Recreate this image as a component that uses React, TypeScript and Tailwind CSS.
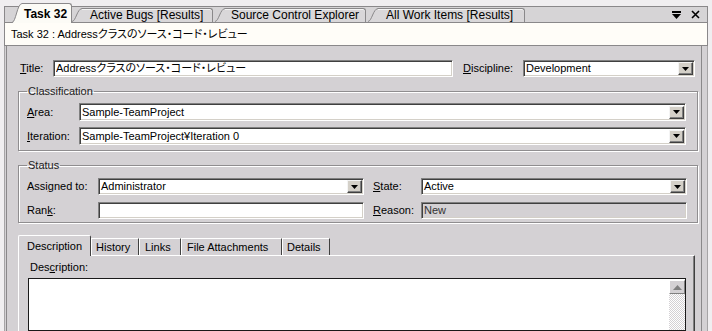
import React from "react";

const sunken =
  "bg-white border border-t-[#808080] border-l-[#808080] border-b-white border-r-white shadow-[inset_1px_1px_0_#404040,inset_-1px_-1px_0_#d4d0c8]";

const DropButton: React.FC = () => (
  <div className="flex-none w-[15px] h-[13px] mr-px bg-[#d4d0c8] border border-t-[#f4f4f4] border-l-[#f4f4f4] border-b-[#404040] border-r-[#404040] shadow-[inset_-1px_-1px_0_#808080] flex items-center justify-center">
    <svg width="7" height="4" viewBox="0 0 7 4" className="block">
      <polygon points="0,0 7,0 3.5,4" fill="#000" />
    </svg>
  </div>
);

const Combo: React.FC<{ text: string; className?: string }> = ({ text, className = "" }) => (
  <div className={`${sunken} h-[17px] flex items-center ${className}`}>
    <span className="flex-1 pl-[2px] truncate">{text}</span>
    <DropButton />
  </div>
);

const Field: React.FC<{ text?: string; className?: string }> = ({ text = "", className = "" }) => (
  <div className={`${sunken} h-[17px] flex items-center pl-[2px] ${className}`}>
    <span className="truncate">{text}</span>
  </div>
);

// document tab with the slanted left edge
const DocTab: React.FC<{ label: string; active?: boolean; boxClass: string }> = ({
  label,
  active,
  boxClass,
}) => {
  const h = active ? 20 : 14;
  const fill = active ? "#fcfbf6" : "#d9d7d9";
  return (
    <div className={`flex items-end flex-none ${active ? "relative z-10 -mb-px h-[20px]" : "h-[14px]"}`}>
      <svg width="10" height={h} className="block flex-none">
        <path d={`M0 ${h} C4 ${h}, 5 1, 10 0.5 L10 ${h} Z`} fill={fill} />
        <path d={`M0 ${h - 0.5} C4 ${h - 1}, 5 1, 10 0.5`} stroke="#8a888a" fill="none" />
      </svg>
      <div
        className={`h-full border-t border-r rounded-tr-[3px] border-[#8a888a] flex items-center whitespace-nowrap ${
          active ? "bg-[#fcfbf6] font-bold pt-[1px]" : "bg-[#d9d7d9] shadow-[inset_0_1px_0_#f4f4f4]"
        } ${boxClass}`}
      >
        {label}
      </div>
    </div>
  );
};

const App: React.FC = () => {
  return (
    <div className="w-[712px] h-[331px] overflow-hidden bg-[#f0eef0] flex flex-col text-black text-[11px] leading-[13px] font-['Liberation_Sans','Noto_Sans_CJK_JP',sans-serif] [font-feature-settings:'palt']">
      {/* document tabs */}
      <div className="pt-[6px] px-[4px] flex-none">
        <div className="h-[16px] border-t border-x border-[#8a888a] bg-[#d6d4d6] flex items-end pl-[7px] text-[12px]">
          <DocTab label="Task 32" active boxClass="w-[50px] pl-[2px]" />
          <DocTab label="Active Bugs [Results]" boxClass="w-[131px] pl-[8px]" />
          <div className="w-[2px] flex-none" />
          <DocTab label="Source Control Explorer" boxClass="w-[141px] pl-[6px]" />
          <div className="w-[2px] flex-none" />
          <DocTab label="All Work Items [Results]" boxClass="w-[147px] pl-[8px]" />
          <div className="ml-auto mr-[7px] self-center flex items-center gap-[10px]">
            <svg width="9" height="8" viewBox="0 0 9 8" className="block">
              <rect x="0" y="0" width="9" height="2" fill="#000" />
              <polygon points="0,3 9,3 4.5,8" fill="#000" />
            </svg>
            <svg width="9" height="9" viewBox="0 0 9 9" className="block">
              <path d="M1 1 L8 8 M8 1 L1 8" stroke="#000" strokeWidth="1.6" />
            </svg>
          </div>
        </div>
      </div>

      {/* title header */}
      <div className="mx-[4px] h-[24px] flex-none border border-[#8a888a] bg-[#fffdf8] flex items-center pl-[6px]">
        Task 32 : Addressクラスのソース・コード・レビュー
      </div>

      {/* form well */}
      <div className="ml-[4px] w-[704px] flex-1 min-h-0 border-x border-[#a6a4a6] bg-[#d4d1d4] flex">
        <div className="ml-px mr-[5px] flex-1 border-x border-[#8a888a] pt-[14px] pl-[11px] pr-[3px] flex flex-col min-h-0">
          {/* title row */}
          <div className="flex items-center pl-[2px] pr-[3px] h-[17px]">
            <span className="w-[33px] flex-none">
              <span className="underline">T</span>itle:
            </span>
            <Field text="Addressクラスのソース・コード・レビュー" className="flex-1" />
            <span className="ml-[10px] w-[60px] flex-none">
              <span className="underline">D</span>iscipline:
            </span>
            <Combo text="Development" className="w-[172px] flex-none" />
          </div>

          {/* classification */}
          <fieldset className="mt-[8px] border border-[#8f8d8f] shadow-[inset_1px_1px_0_#fff,1px_1px_0_#fff] pl-[8px] pr-[11px] pt-[5px] pb-[5px] flex flex-col gap-[6px]">
            <legend className="px-[1px] text-[#222]">Classification</legend>
            <div className="flex items-center h-[18px]">
              <span className="w-[52px] flex-none">
                <span className="underline">A</span>rea:
              </span>
              <Combo text="Sample-TeamProject" className="flex-1 h-[18px]" />
            </div>
            <div className="flex items-center h-[18px]">
              <span className="w-[52px] flex-none">
                <span className="underline">I</span>teration:
              </span>
              <Combo text="Sample-TeamProject¥Iteration 0" className="flex-1 h-[18px]" />
            </div>
          </fieldset>

          {/* status */}
          <fieldset className="mt-[8px] border border-[#8f8d8f] shadow-[inset_1px_1px_0_#fff,1px_1px_0_#fff] pl-[8px] pr-[10px] pt-[6px] pb-[3px] flex flex-col gap-[7px]">
            <legend className="px-[1px] text-[#222]">Status</legend>
            <div className="flex items-center h-[17px]">
              <span className="w-[71px] flex-none">
                Assi<span className="underline">g</span>ned to:
              </span>
              <Combo text="Administrator" className="w-[266px] flex-none" />
              <span className="ml-[9px] w-[48px] flex-none">
                <span className="underline">S</span>tate:
              </span>
              <Combo text="Active" className="flex-1" />
            </div>
            <div className="flex items-center h-[17px]">
              <span className="w-[71px] flex-none">
                Ran<span className="underline">k</span>:
              </span>
              <Field className="w-[266px] flex-none" />
              <span className="ml-[9px] w-[48px] flex-none">
                <span className="underline">R</span>eason:
              </span>
              <div className="flex-1 h-[17px] bg-[#d4d1d4] border border-t-[#808080] border-l-[#808080] border-b-white border-r-white shadow-[inset_1px_1px_0_#404040,inset_-1px_-1px_0_#d4d0c8] flex items-center pl-[2px] text-[#333]">
                New
              </div>
            </div>
          </fieldset>

          {/* detail tabs */}
          <div className="mt-[12px] mr-[3px] flex items-end h-[20px] flex-none">
            <div className="relative z-10 -mb-px h-[21px] w-[73px] flex-none border-t border-l border-white border-r border-r-[#404040] rounded-t-[2px] bg-[#d4d1d4] pl-[8px] pt-[4px]">
              Description
            </div>
            <div className="h-[17px] w-[48px] flex-none border-l border-t border-white border-r border-r-[#404040] pl-[4px] flex items-center">
              History
            </div>
            <div className="h-[17px] w-[42px] flex-none border-l border-t border-white border-r border-r-[#404040] pl-[5px] flex items-center">
              Links
            </div>
            <div className="h-[17px] w-[101px] flex-none border-l border-t border-white border-r border-r-[#404040] pl-[5px] flex items-center">
              File Attachments
            </div>
            <div className="h-[17px] w-[48px] flex-none border-l border-t border-white border-r border-r-[#404040] pl-[4px] flex items-center">
              Details
            </div>
          </div>
          <div className="flex-1 min-h-0 mr-[3px] border-t border-l border-white border-r border-r-[#404040] shadow-[inset_-1px_0_0_#808080] pl-[9px] pr-[8px] pt-[5px] flex flex-col">
            <span className="pl-[2px]">
              Des<span className="underline">c</span>ription:
            </span>
            <div className="mt-[4px] flex-1 min-h-0 bg-white border border-[#1a1a1a] flex">
              <div className="flex-1" />
              <div className="w-[16px] flex-none flex flex-col pt-px">
                <div className="h-[14px] bg-[#d4d1d4] border border-t-white border-l-white border-b-[#808080] border-r-[#808080] flex items-center justify-center">
                  <svg width="9" height="5" viewBox="0 0 9 5" className="block">
                    <polygon points="4.5,0 9,5 0,5" fill="#808080" />
                  </svg>
                </div>
                <div className="flex-1 bg-[repeating-conic-gradient(#d4d1d4_0_25%,#ffffff_0_50%)] bg-[length:2px_2px]" />
              </div>
            </div>
          </div>
        </div>
      </div>
    </div>
  );
};

export default App;
